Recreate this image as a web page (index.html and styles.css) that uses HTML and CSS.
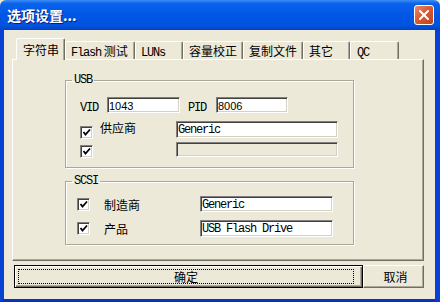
FILE: index.html
```html
<!DOCTYPE html>
<html lang="zh-CN">
<head>
  <meta charset="UTF-8">
  <meta name="viewport" content="width=device-width, initial-scale=1.0">
  <title>选项设置</title>
  <link rel="stylesheet" href="styles.css">
</head>
<body>
  <div class="window">
    <div class="titlebar">
      <span class="title">选项设置...</span>
      <button class="close">
        <svg width="10" height="10" viewBox="0 0 10 10">
          <path d="M1 1 L9 9 M9 1 L1 9" stroke="#fff" stroke-width="2" stroke-linecap="square"/>
        </svg>
      </button>
    </div>

    <div class="frame">
      <div class="tabs">
        <div class="tab active tab-str">字符串</div>
        <div class="tab tab-flash"><span class="mono">Flash</span> 测试</div>
        <div class="tab tab-luns"><span class="mono">LUNs</span></div>
        <div class="tab tab-cap">容量校正</div>
        <div class="tab tab-copy">复制文件</div>
        <div class="tab tab-other">其它</div>
        <div class="tab tab-qc"><span class="mono">QC</span></div>
      </div>

      <div class="panel">
        <fieldset class="group group-usb">
          <legend class="mono">USB</legend>
          <div class="row row-id">
            <span class="lbl mono lbl-vid">VID</span>
            <span class="edit edit-vid">1043</span>
            <span class="lbl mono lbl-pid">PID</span>
            <span class="edit edit-pid">8006</span>
          </div>
          <div class="row row-vendor">
            <span class="check"><svg width="9" height="9" viewBox="0 0 9 9"><path d="M1.5 4 L3.5 6.5 L8 1.5" fill="none" stroke="#000" stroke-width="1.8"/></svg></span>
            <span class="cap cap-vendor">供应商</span>
            <span class="edit edit-wide mono">Generic</span>
          </div>
          <div class="row row-extra">
            <span class="check"><svg width="9" height="9" viewBox="0 0 9 9"><path d="M1.5 4 L3.5 6.5 L8 1.5" fill="none" stroke="#000" stroke-width="1.8"/></svg></span>
            <span class="edit edit-wide edit-off"></span>
          </div>
        </fieldset>

        <fieldset class="group group-scsi">
          <legend class="mono">SCSI</legend>
          <div class="row row-scsi">
            <span class="check"><svg width="9" height="9" viewBox="0 0 9 9"><path d="M1.5 4 L3.5 6.5 L8 1.5" fill="none" stroke="#000" stroke-width="1.8"/></svg></span>
            <span class="cap cap-scsi">制造商</span>
            <span class="edit edit-scsi mono">Generic</span>
          </div>
          <div class="row row-scsi row-product">
            <span class="check"><svg width="9" height="9" viewBox="0 0 9 9"><path d="M1.5 4 L3.5 6.5 L8 1.5" fill="none" stroke="#000" stroke-width="1.8"/></svg></span>
            <span class="cap cap-scsi">产品</span>
            <span class="edit edit-scsi edit-tall mono">USB Flash Drive</span>
          </div>
        </fieldset>
      </div>

      <div class="buttons">
        <button class="btn btn-ok"><span class="focus">确定</span></button>
        <button class="btn btn-cancel">取消</button>
      </div>
    </div>
  </div>
</body>
</html>
```

FILE: styles.css
```css
body {
  margin: 0;
  width: 440px;
  height: 302px;
  overflow: hidden;
  font-family: "Noto Sans CJK SC", "Liberation Sans", sans-serif;
  font-size: 12px;
  color: #000;
  background: #ece9d8;
}
.window {
  width: 440px;
  height: 302px;
  display: flex;
  flex-direction: column;
}
.titlebar {
  height: 30px;
  flex: none;
  display: flex;
  align-items: center;
  padding-left: 7px;
  background: linear-gradient(#3b8cf5 0%, #0a63ec 12%, #0058e6 45%, #0053de 85%, #0042c4 100%);
  border-radius: 6px 6px 0 0;
}
.title {
  color: #fff;
  font-size: 14px;
  font-weight: bold;
  text-shadow: 1px 1px 0 #0a1d7a;
  line-height: 16px;
}
.close {
  margin-left: auto;
  margin-right: 6px;
  width: 20px;
  height: 20px;
  padding: 0;
  border: 1px solid #fff;
  border-radius: 3px;
  background: linear-gradient(135deg, #e98a6c 0%, #d95b33 45%, #c0401a 100%);
  display: flex;
  align-items: center;
  justify-content: center;
}
.frame {
  flex: 1;
  border-left: 4px solid #0842d4;
  border-right: 5px solid #0842d4;
  border-bottom: 3px solid #0831c0;
  padding-top: 8px;
  display: flex;
  flex-direction: column;
}
.mono {
  font-family: "Liberation Mono", monospace;
  font-size: 12px;
  letter-spacing: -1.2px;
}

/* tabs */
.tabs {
  height: 21px;
  margin-left: 12px;
  display: flex;
  align-items: flex-end;
}
.tab {
  box-sizing: border-box;
  height: 18px;
  padding-left: 5px;
  line-height: 17px;
  border-top: 1px solid #fff;
  border-left: 1px solid #fff;
  border-right: 1px solid #716f64;
  border-radius: 2px 2px 0 0;
  box-shadow: inset -1px 0 0 #aca899;
  white-space: nowrap;
}
.tab.active {
  height: 22px;
  margin-bottom: -1px;
  padding-top: 2px;
  line-height: 17px;
  position: relative;
  z-index: 1;
  background: #ece9d8;
}
.tab-str { width: 49px; padding-left: 6px; }
.tab-flash { width: 70px; }
.tab-luns { width: 48px; }
.tab-cap { width: 60px; }
.tab-copy { width: 60px; }
.tab-other { width: 47px; }
.tab-qc { width: 49px; padding-left: 6px; }

.panel {
  box-sizing: border-box;
  width: 412px;
  height: 202px;
  margin-left: 8px;
  padding: 13px 0 0 52px;
  border-top: 1px solid #fff;
  border-left: 1px solid #fff;
  border-right: 1px solid #716f64;
  border-bottom: 1px solid #716f64;
  box-shadow: inset -1px -1px 0 #aca899;
}

/* group boxes */
.group {
  box-sizing: border-box;
  width: 289px;
  margin: 0;
  padding: 0;
  border: 1px solid #aca899;
  box-shadow: 1px 1px 0 #fff, inset 1px 1px 0 #fff;
}
.group legend {
  padding: 0 2px;
  line-height: 14px;
}
.group-usb { padding: 0 0 10px 14px; }
.group-usb legend { margin-left: -8px; }
.group-scsi { margin-top: 6px; padding: 0 0 7px 11px; }
.group-scsi legend { margin-left: -5px; }

.row {
  display: flex;
}
.row-id {
  height: 16px;
  margin-top: 10px;
  align-items: flex-end;
}
.lbl { line-height: 12px; margin-bottom: -1px; }
.lbl-vid { width: 27px; }
.lbl-pid { width: 28px; margin-left: 8px; }
.row-vendor {
  height: 18px;
  margin-top: 8px;
}
.row-extra {
  height: 15px;
  margin-top: 3px;
}
.row-vendor .check { margin-top: 5px; }
.row-extra .check { margin-top: 3px; margin-right: 83px; }
.cap-vendor {
  width: 76px;
  margin-left: 7px;
  line-height: 13px;
}
.row-scsi {
  height: 16px;
  margin-top: 8px;
  align-items: center;
}
.row-product { height: 17px; }
.cap-scsi {
  width: 96px;
  margin-left: 14px;
  line-height: 13px;
}

/* controls */
.edit {
  box-sizing: border-box;
  height: 16px;
  padding-left: 1px;
  background: #fff;
  border-top: 1px solid #808080;
  border-left: 1px solid #808080;
  border-right: 1px solid #fff;
  border-bottom: 1px solid #fff;
  box-shadow: inset 1px 1px 0 #404040, inset -1px -1px 0 #d4d0c8;
  font-family: "Liberation Sans", sans-serif;
  font-size: 11px;
  line-height: 14px;
  padding-top: 1px;
  white-space: nowrap;
}
.edit.mono {
  font-family: "Liberation Mono", monospace;
  font-size: 12px;
}
.edit-vid { width: 73px; }
.edit-pid { width: 72px; }
.edit-wide { width: 162px; height: 17px; }
.edit-off { height: 15px; background: #ece9d8; }
.edit-scsi { width: 133px; }
.edit-tall { height: 17px; }
.check {
  box-sizing: border-box;
  width: 13px;
  height: 13px;
  flex: none;
  background: #fff;
  border-top: 1px solid #808080;
  border-left: 1px solid #808080;
  border-right: 1px solid #fff;
  border-bottom: 1px solid #fff;
  box-shadow: inset 1px 1px 0 #404040, inset -1px -1px 0 #d4d0c8;
  display: flex;
  align-items: center;
  justify-content: center;
}

/* buttons */
.buttons {
  display: flex;
  margin: 4px 0 0 10px;
}
.btn {
  box-sizing: border-box;
  height: 23px;
  padding: 0;
  font-family: "Noto Sans CJK SC", sans-serif;
  font-size: 12px;
  background: #ece9d8;
  border-top: 1px solid #fff;
  border-left: 1px solid #fff;
  border-right: 1px solid #716f64;
  border-bottom: 1px solid #716f64;
  box-shadow: inset -1px -1px 0 #aca899;
}
.btn-ok {
  width: 349px;
  padding: 3px 8px 3px 3px;
  border: 1px solid #000;
  box-shadow: inset 1px 1px 0 #fff, inset -1px -1px 0 #716f64, inset -2px -2px 0 #aca899;
}
.focus {
  box-sizing: border-box;
  display: block;
  height: 15px;
  line-height: 13px;
  border: 1px dotted #000;
}
.btn-cancel {
  width: 61px;
  padding-left: 4px;
}
```
